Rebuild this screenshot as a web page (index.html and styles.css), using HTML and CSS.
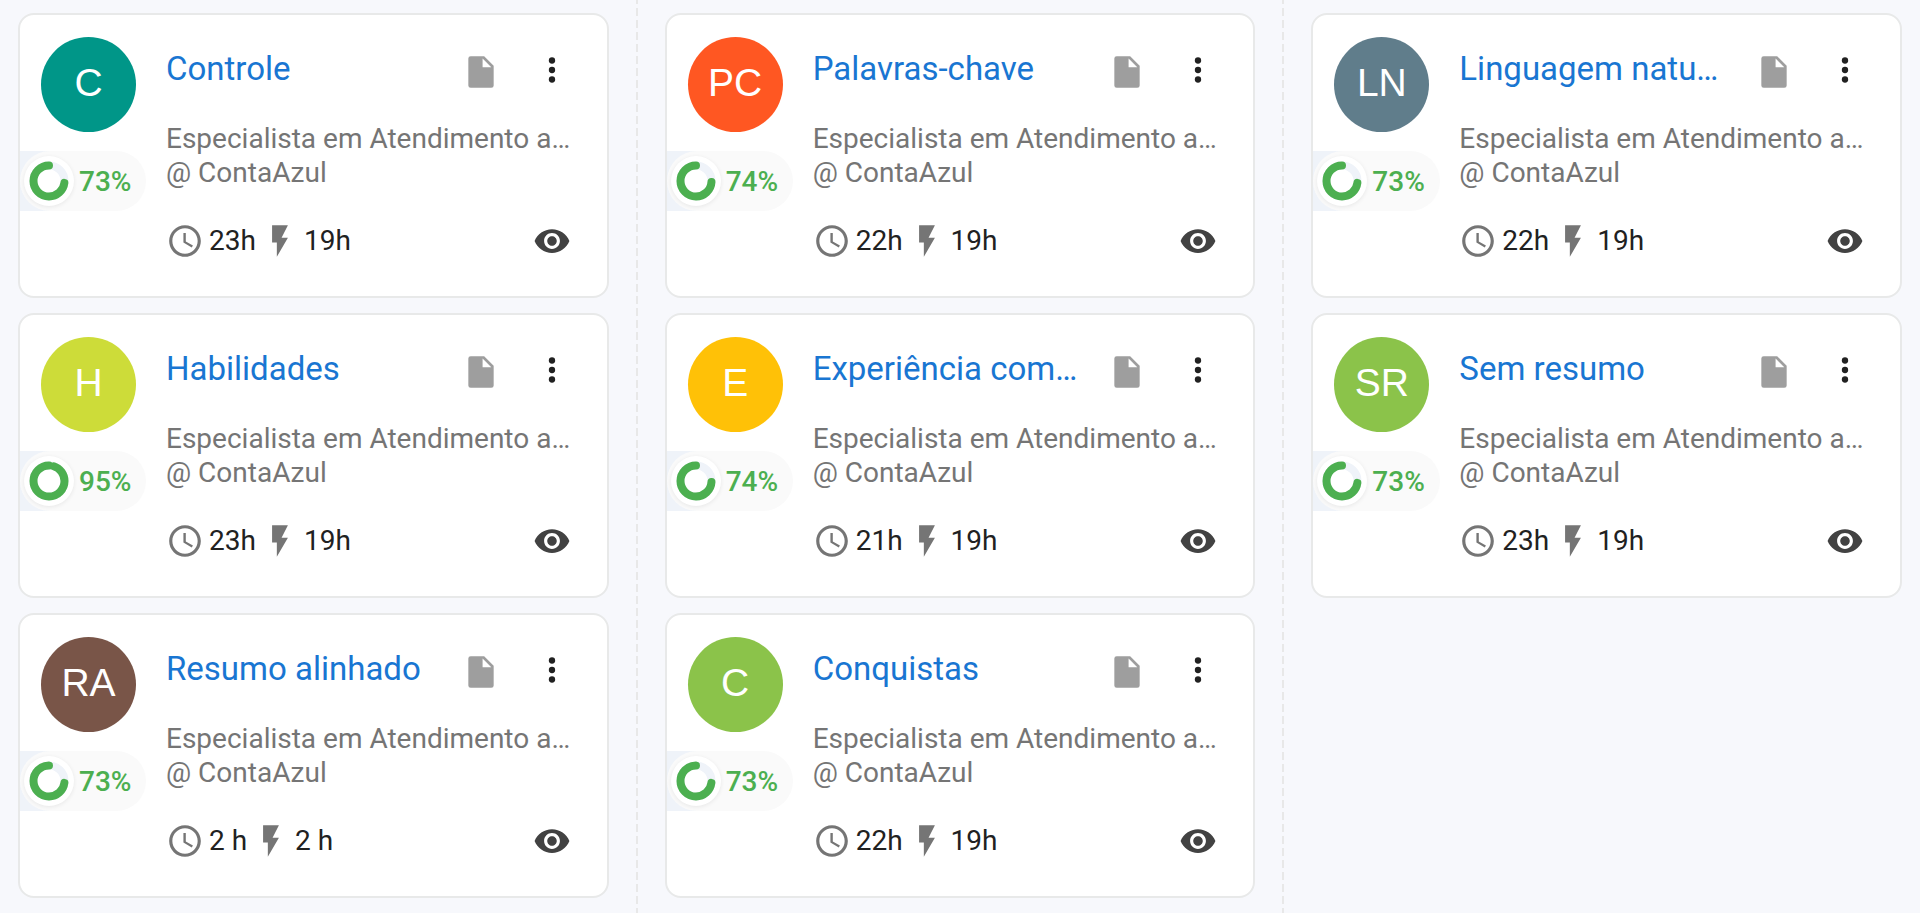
FILE: index.html
```
<!DOCTYPE html>
<html lang="pt-BR">
<head>
<meta charset="utf-8">
<meta name="viewport" content="width=device-width, initial-scale=1">
<title>Candidatos</title>
<link rel="stylesheet" href="styles.css">
</head>
<body>
<svg class="sprite" aria-hidden="true">
  <symbol id="file" viewBox="0 0 24 24"><path d="M13 9V3.500L18.500 9ZM5.500 2A1.500 1.500 0 0 0 4 3.500V20.500A1.500 1.500 0 0 0 5.500 22H18.500A1.500 1.500 0 0 0 20 20.500V8L14 2Z"/></symbol>
  <symbol id="more" viewBox="0 0 24 24"><circle cx="12" cy="6" r="2"/><circle cx="12" cy="12" r="2"/><circle cx="12" cy="18" r="2"/></symbol>
  <symbol id="clock" viewBox="0 0 24 24"><path d="M11.990 2C6.470 2 2 6.480 2 12s4.470 10 9.990 10C17.520 22 22 17.520 22 12S17.520 2 11.990 2zM12 20c-4.420 0-8-3.580-8-8s3.580-8 8-8 8 3.580 8 8-3.580 8-8 8z"/><path d="M12.500 7H11v6l5.250 3.150.75-1.230-4.500-2.670z"/></symbol>
  <symbol id="bolt" viewBox="0 0 24 24"><path d="M7 2v11h3v9l7-12h-4l4-8z"/></symbol>
  <symbol id="eye" viewBox="0 0 24 24"><path d="M12 4.500C7 4.500 2.730 7.610 1 12c1.730 4.390 6 7.500 11 7.500s9.270-3.110 11-7.500c-1.730-4.390-6-7.500-11-7.500zM12 17c-2.760 0-5-2.240-5-5s2.240-5 5-5 5 2.240 5 5-2.240 5-5 5zm0-8c-1.660 0-3 1.340-3 3s1.340 3 3 3 3-1.340 3-3-1.340-3-3-3z"/></symbol>
</svg>
<main class="board" id="board"></main>
<script src="app.js"></script>
</body>
</html>
```
FILE: styles.css
```
* {
  box-sizing: border-box;
}

body {
  margin: 0;
  background: #f7f8fc;
  color: #212121;
  font-family: Roboto, "Liberation Sans", sans-serif;
  font-size: 28px;
  line-height: 34px;
}

.sprite {
  display: none;
}

.board {
  display: grid;
  grid-template-columns: minmax(0, 1fr) 2px minmax(0, 1fr) 2px minmax(0, 1fr);
  column-gap: 27px;
  min-height: 100vh;
  padding: 0 18px;
}

.divider {
  background: repeating-linear-gradient(#e8e8e8 0 8px, transparent 8px 12px) 0 -4px;
}

.column {
  display: flex;
  flex-direction: column;
  gap: 15px;
  padding: 13px 0 15px;
}

.card {
  display: flex;
  background: #fff;
  border: 2px solid #e8e9e9;
  border-radius: 16px;
}

.side {
  display: flex;
  flex: none;
  flex-direction: column;
  align-items: flex-start;
  gap: 19px;
  width: 146px;
  padding-top: 22px;
}

.avatar {
  display: grid;
  place-items: center;
  width: 95px;
  height: 95px;
  margin-left: 21px;
  padding-bottom: 4px;
  border-radius: 50%;
  color: #fff;
  font-family: "Liberation Sans", Arial, sans-serif;
  font-size: 39px;
}

.teal { background: #009688; }
.orange { background: #ff5722; }
.slate { background: #607d8b; }
.lime { background: #cddc39; }
.amber { background: #ffc107; }
.green { background: #8bc34a; }
.brown { background: #795548; }

.score-track {
  background: linear-gradient(to right, #eff3f9 30px, transparent 30px);
}

.score {
  display: flex;
  align-items: center;
  gap: 5px;
  height: 60px;
  padding: 0 15px 0 4px;
  border-radius: 30px;
  background: #fafafa;
  color: #4caf50;
  font-weight: 500;
  line-height: 36px;
}

.score span {
  padding-top: 2px;
}

.ring {
  width: 50px;
  height: 50px;
  border-radius: 50%;
  background: #fff;
  box-shadow: 0 1px 4px rgba(0, 0, 0, 0.08);
  fill: none;
  stroke-width: 8px;
}

.ring-base {
  stroke: #eff3f9;
}

.ring-value {
  stroke: #4caf50;
  stroke-linecap: round;
}

.content {
  flex: 1;
  min-width: 0;
  padding: 34px 28px 36px 0;
}

.header {
  display: flex;
  align-items: flex-start;
  height: 42px;
  margin-bottom: 31px;
  padding-right: 8px;
}

.title {
  flex: 1;
  min-width: 0;
  overflow: hidden;
  color: #1976d2;
  font-size: 33px;
  font-weight: 400;
  line-height: 40px;
  margin: 0;
  text-overflow: ellipsis;
  white-space: nowrap;
}

.title a {
  color: inherit;
  text-decoration: none;
}

.icon {
  display: block;
  flex: none;
  width: 38px;
  height: 38px;
  fill: #757575;
}

.file {
  margin: 4px 33px 0 20px;
  fill: #9e9e9e;
}

.action {
  padding: 0;
  border: 0;
  background: none;
  cursor: pointer;
}

.more {
  margin-top: 2px;
}

.more .icon {
  fill: #212121;
}

.view {
  margin-left: auto;
}

.view .icon {
  fill: #424242;
}

.role {
  margin: 0 0 32px;
  color: #757575;
}

.role span {
  display: block;
  overflow: hidden;
  text-overflow: ellipsis;
  white-space: nowrap;
}

.footer {
  display: flex;
  align-items: center;
  gap: 5px;
  padding-right: 8px;
}
```
FILE: app.js
```
const columns = [
  [
    ["C", "teal", "Controle", 73, "23h", "19h"],
    ["H", "lime", "Habilidades", 95, "23h", "19h"],
    ["RA", "brown", "Resumo alinhado", 73, "2 h", "2 h"]
  ],
  [
    ["PC", "orange", "Palavras-chave", 74, "22h", "19h"],
    ["E", "amber", "Experiência com…", 74, "21h", "19h"],
    ["C", "green", "Conquistas", 73, "22h", "19h"]
  ],
  [
    ["LN", "slate", "Linguagem natu…", 73, "22h", "19h"],
    ["SR", "green", "Sem resumo", 73, "23h", "19h"]
  ]
];

const icon = (name, extra = "") =>
  `<svg class="icon ${extra}" aria-hidden="true"><use href="#${name}"/></svg>`;

// The ring starts at the top and fills counter-clockwise.
const ring = score => `
  <svg class="ring" viewBox="0 0 50 50" aria-hidden="true">
    <circle class="ring-base" cx="25" cy="25" r="15.500"/>
    <circle class="ring-value" cx="25" cy="25" r="15.500" pathLength="100"
      stroke-dasharray="${score} 100" transform="translate(50 0) scale(-1 1) rotate(-90 25 25)"/>
  </svg>`;

const card = ([initials, color, title, score, time, fast]) => `
  <article class="card">
    <div class="side">
      <div class="avatar ${color}">${initials}</div>
      <div class="score-track"><div class="score">${ring(score)}<span>${score}%</span></div></div>
    </div>
    <div class="content">
      <div class="header">
        <h2 class="title"><a href="#">${title}</a></h2>
        ${icon("file", "file")}
        <button class="action more" type="button" aria-label="Mais opções">${icon("more")}</button>
      </div>
      <p class="role"><span>Especialista em Atendimento a…</span><span>@ ContaAzul</span></p>
      <div class="footer">
        ${icon("clock")}<span>${time}</span>
        ${icon("bolt")}<span>${fast}</span>
        <button class="action view" type="button" aria-label="Visualizar">${icon("eye")}</button>
      </div>
    </div>
  </article>`;

document.getElementById("board").innerHTML = columns
  .map(cards => `<section class="column">${cards.map(card).join("")}</section>`)
  .join('<div class="divider"></div>');
```
